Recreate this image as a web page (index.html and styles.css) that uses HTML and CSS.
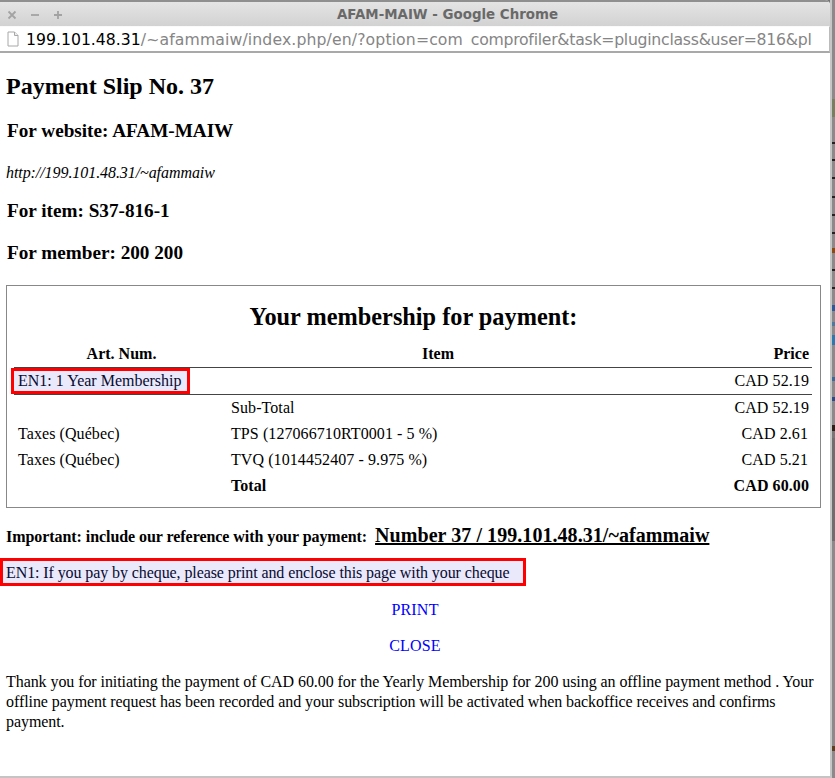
FILE: index.html
```html
<!DOCTYPE html>
<html lang="en">
<head>
<meta charset="utf-8">
<title>AFAM-MAIW - Google Chrome</title>
<link rel="stylesheet" href="styles.css">
</head>
<body>
<div class="screen">
  <div class="window">
    <header class="titlebar">
      <div class="controls">
        <svg class="ctl" viewBox="0 0 10 10"><path d="M1.5 1.5l7 7M8.5 1.5l-7 7"/></svg>
        <svg class="ctl" viewBox="0 0 10 10"><path d="M1 5h8"/></svg>
        <svg class="ctl" viewBox="0 0 10 10"><path d="M1 5h8M5 1v8"/></svg>
      </div>
      <div class="title">AFAM-MAIW - Google Chrome</div>
    </header>
    <div class="urlbar">
      <svg class="pageicon" viewBox="0 0 12 16"><path d="M1 1h6.5L11 4.5V15H1z" fill="#fff" stroke="#a8a8a8"/><path d="M7.5 1v3.5H11" fill="#eee" stroke="#a8a8a8"/></svg>
      <div class="url"><span class="host">199.101.48.31</span><span class="path">/~afammaiw/index.php/en/?option=com</span><span class="clipped">_</span><span class="query">comprofiler&amp;task=pluginclass&amp;user=816&amp;pl</span></div>
    </div>
    <main class="page">
      <h2 class="slip">Payment Slip No. 37</h2>
      <h3 class="site">For website: AFAM-MAIW</h3>
      <p class="siteurl">http://199.101.48.31/~afammaiw</p>
      <h3 class="item">For item: S37-816-1</h3>
      <h3 class="member">For member: 200 200</h3>
      <section class="box">
        <h2 class="boxtitle">Your membership for payment:</h2>
        <table class="lines">
          <thead>
            <tr><th class="c1">Art. Num.</th><th class="c2">Item</th><th class="c3">Price</th></tr>
          </thead>
          <tbody>
            <tr class="ruled"><td class="c1"><span class="tag">EN1: 1 Year Membership</span></td><td></td><td class="c3">CAD 52.19</td></tr>
            <tr><td></td><td>Sub-Total</td><td class="c3">CAD 52.19</td></tr>
            <tr><td>Taxes (Québec)</td><td>TPS (127066710RT0001 - 5 %)</td><td class="c3 tax">CAD 2.61</td></tr>
            <tr><td>Taxes (Québec)</td><td>TVQ (1014452407 - 9.975 %)</td><td class="c3 tax">CAD 5.21</td></tr>
            <tr class="total"><td></td><td>Total</td><td class="c3">CAD 60.00</td></tr>
          </tbody>
        </table>
      </section>
      <p class="ref"><strong class="reflabel">Important: include our reference with your payment:</strong> <strong class="refnum">Number 37 / 199.101.48.31/~afammaiw</strong></p>
      <p class="notice">EN1: If you pay by cheque, please print and enclose this page with your cheque</p>
      <p class="action"><a href="#">PRINT</a></p>
      <p class="action"><a href="#">CLOSE</a></p>
      <p class="thanks">Thank you for initiating the payment of CAD 60.00 for the Yearly Membership for 200 using an offline payment method . Your offline payment request has been recorded and your subscription will be activated when backoffice receives and confirms payment.</p>
    </main>
  </div>
  <div class="edge"></div>
</div>
</body>
</html>
```
FILE: styles.css
```css
html, body { margin: 0; padding: 0; background: #fff; }
body { font-family: "Liberation Serif", serif; font-size: 16px; color: #000; overflow: hidden; }
.screen { display: flex; width: 835px; height: 778px; overflow: hidden; background: #777; }
.window { width: 830px; flex: none; display: flex; flex-direction: column; background: #fff; border-bottom: 2px solid #c4c4c4; box-sizing: border-box; border-top-right-radius: 5px; overflow: hidden; }
.edge {
  flex: 1;
  border-left: 2px solid #c6c6c6;
  background: linear-gradient(to bottom,
    #8a8a8a 0 99px, #74805f 99px 117px, #8a8a8a 117px 142px,
    #222 142px 144px, #8a8a8a 144px 159px, #222 159px 161px, #8a8a8a 161px 177px,
    #222 177px 179px, #8a8a8a 179px 196px, #222 196px 198px, #8a8a8a 198px 214px,
    #222 214px 216px, #8a8a8a 216px 232px, #222 232px 234px, #8a8a8a 234px 248px,
    #8a4a10 248px 253px, #8a8a8a 253px 269px, #222 269px 271px, #8a8a8a 271px 287px,
    #222 287px 289px, #8a8a8a 289px 305px, #2a5a9a 305px 311px, #8a8a8a 311px 322px,
    #4a7aa0 322px 326px, #8a8a8a 326px 335px, #2a7ab0 335px 345px, #8a8a8a 345px 377px,
    #3a6a9a 377px 381px, #8a8a8a 381px 397px, #2a4a8a 397px 401px, #8a8a8a 401px 425px,
    #2a2018 425px 431px, #777 431px 438px, #6e6e6e 438px 541px, #8a8a8a 541px 746px,
    #5a4020 746px 751px, #8a8a8a 751px);
}

.titlebar { height: 26px; flex: none; box-sizing: border-box; border-top: 2px solid #8f8f8f; background: linear-gradient(#e4e4e4, #d2d2d2); position: relative; display: flex; align-items: center; justify-content: center; }
.controls { position: absolute; left: 7px; top: 8px; display: flex; gap: 13px; }
.ctl { width: 10px; height: 10px; fill: none; stroke: #a3a3a3; stroke-width: 1.8; }
.title { font-family: "DejaVu Sans", sans-serif; font-weight: bold; font-size: 13.4px; color: #696969; margin-left: 65px; }
.urlbar { height: 27px; flex: none; box-sizing: border-box; border-top: 1px solid #fafafa; border-bottom: 2px solid #a9a9a9; border-right: 1px solid #bbb; display: flex; align-items: center; padding-left: 7px; gap: 7px; background: #fff; overflow: hidden; }
.pageicon { width: 12px; height: 16px; flex: none; }
.url { font-family: "DejaVu Sans", sans-serif; font-size: 15.7px; color: #858585; white-space: nowrap; }
.host { color: #000; }
.path { letter-spacing: 0.11px; }
.clipped { color: transparent; }
.query { letter-spacing: -0.27px; }

.page { flex: 1; padding: 0 6px; overflow: hidden; }
h2, h3, p { margin: 0; }
.slip { font-size: 24px; line-height: 28px; margin-top: 19px; }
.site, .item, .member { font-size: 19.2px; line-height: 22px; padding-left: 1px; }
.site { margin-top: 20px; }
.siteurl { font-style: italic; line-height: 18px; margin-top: 22px; letter-spacing: -0.07px; }
.item { margin-top: 18px; }
.member { margin-top: 20px; }

.box { border: 1px solid #888; margin-top: 21px; width: 815px; height: 223px; box-sizing: border-box; padding: 0 9px 0 7px; }
.boxtitle { font-size: 24.3px; line-height: 28px; text-align: center; margin-top: 17px; padding-left: 2px; }
.lines { border-collapse: collapse; width: 798px; table-layout: fixed; margin-top: 10px; }
.lines th { font-weight: bold; height: 26px; padding: 0 3px; border-bottom: 1px solid #444; }
.lines td { height: 26px; padding: 0 3px; white-space: nowrap; letter-spacing: 0.08px; }
.lines .c1 { width: 207px; padding-left: 4px; }
.lines .c2 { width: 414px; }
.lines tr > td:first-child { padding-left: 4px; }
.lines .c3 { text-align: right; }
.lines td.tax { padding-right: 4px; }
.ruled td { border-bottom: 1px solid #444; }
.total td { font-weight: bold; }
.tag { display: inline-block; background: #e9e9fb; color: #0a0a30; outline: 3px solid #f00; line-height: 20px; margin-left: -4px; padding: 0 5px 0 4px; letter-spacing: 0; }

.ref { margin-top: 14px; line-height: 26px; }
.reflabel { letter-spacing: -0.06px; }
.refnum { font-size: 20px; text-decoration: underline; margin-left: 4px; letter-spacing: 0.06px; }
.notice { background: #e9e9fb; color: #0a0a30; border: 3px solid #f00; box-sizing: border-box; width: 526px; height: 28px; line-height: 24px; margin: 8px 0 0 -6px; padding-left: 3px; white-space: nowrap; letter-spacing: -0.09px; }
.action { text-align: center; line-height: 18px; margin-top: 18px; }
.notice + .action { margin-top: 15px; }
.action a { color: #00f; text-decoration: none; letter-spacing: 0.2px; }
.thanks { line-height: 20px; margin-top: 17px; letter-spacing: -0.07px; }
```
